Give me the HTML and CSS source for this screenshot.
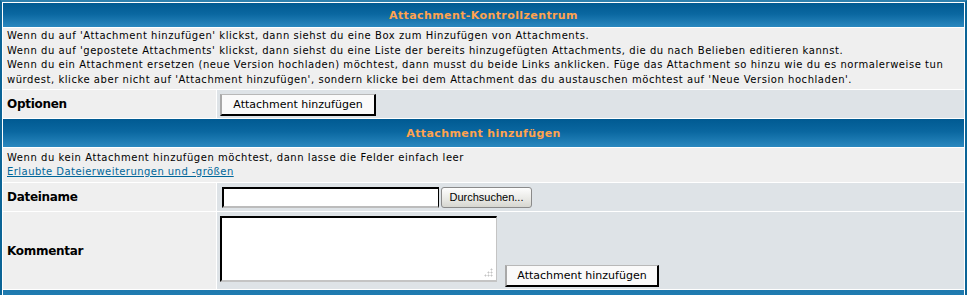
FILE: index.html
```html
<!DOCTYPE html>
<html lang="de">
<head>
  <meta charset="UTF-8" />
  <title>Attachment-Kontrollzentrum</title>
  <link rel="stylesheet" href="styles.css">
</head>
<body>
  <table class="forumline">
    <tr>
      <th colspan="2" class="head">Attachment-Kontrollzentrum</th>
    </tr>
    <tr>
      <td colspan="2" class="row1 intro">
        Wenn du auf 'Attachment hinzufügen' klickst, dann siehst du eine Box zum Hinzufügen von Attachments.<br>
        Wenn du auf 'gepostete Attachments' klickst, dann siehst du eine Liste der bereits hinzugefügten Attachments, die du nach Belieben editieren kannst.<br>
        Wenn du ein Attachment ersetzen (neue Version hochladen) möchtest, dann musst du beide Links anklicken. Füge das Attachment so hinzu wie du es normalerweise tun würdest, klicke aber nicht auf 'Attachment hinzufügen', sondern klicke bei dem Attachment das du austauschen möchtest auf 'Neue Version hochladen'.
      </td>
    </tr>
    <tr>
      <td class="row1 label">Optionen</td>
      <td class="row2 field">
        <div class="options">
          <button type="button" class="button">Attachment hinzufügen</button>
        </div>
      </td>
    </tr>
    <tr>
      <th colspan="2" class="head tall">Attachment hinzufügen</th>
    </tr>
    <tr>
      <td colspan="2" class="row1 note">
        Wenn du kein Attachment hinzufügen möchtest, dann lasse die Felder einfach leer<br>
        <a href="#">Erlaubte Dateierweiterungen und -größen</a>
      </td>
    </tr>
    <tr>
      <td class="row1 label">Dateiname</td>
      <td class="row2 field">
        <div class="file-row">
          <input type="text" class="post" readonly>
          <button type="button" class="browse">Durchsuchen...</button>
        </div>
      </td>
    </tr>
    <tr>
      <td class="row1 label">Kommentar</td>
      <td class="row2 field">
        <div class="comment-row">
          <textarea class="post" rows="3" cols="35"></textarea>
          <button type="button" class="button">Attachment hinzufügen</button>
        </div>
      </td>
    </tr>
    <tr>
      <td colspan="2" class="cat-bottom"></td>
    </tr>
  </table>
</body>
</html>
```

FILE: styles.css
```css
/* Forum table, subSilver look */
body {
  margin: 0;
  background: #fff;
  font-family: "DejaVu Sans", Verdana, sans-serif;
  color: #000;
}
.forumline {
  width: 967px;
  background: #fff;
  border: 2px solid #0b6496;
  border-top-color: #2f80ad;
  border-spacing: 1px;
}
th, td {
  padding: 0;
}
.head {
  height: 24px;
  background: linear-gradient(to bottom, #005a92 0%, #0a67a0 45%, #2a88bf 100%);
  color: #ffa34f;
  font-size: 11px;
  font-weight: bold;
  letter-spacing: 0.4px;
  text-align: center;
  vertical-align: middle;
}
.head.tall {
  height: 28px;
}
.row1 {
  background: #efefef;
}
.row2 {
  background: #dee3e7;
}
.intro {
  padding: 1px 4px 2px;
  font-size: 10px;
  line-height: 14.5px;
  letter-spacing: 0.55px;
}
.note {
  padding: 3px 4px;
  font-size: 10px;
  line-height: 14px;
  letter-spacing: 0.55px;
}
.note a {
  color: #006699;
  letter-spacing: 0.45px;
}
.label {
  width: 205px;
  padding: 0 4px;
  font-size: 12px;
  font-weight: bold;
  letter-spacing: -0.3px;
  vertical-align: middle;
}
.field {
  vertical-align: top;
}
.options {
  padding: 3px 3px 2px;
}
.button {
  height: 22px;
  width: 156px;
  padding: 0;
  background: #fafafa;
  border-style: solid;
  border-width: 1px 2px 2px 2px;
  border-color: #b8b8b8 #000 #000 #a8a8a8;
  font-family: "DejaVu Sans", Verdana, sans-serif;
  font-size: 11px;
  color: #000;
}
.file-row {
  display: flex;
  align-items: center;
  gap: 2px;
  padding: 4px 5px 3px;
}
.post {
  box-sizing: border-box;
  background: #fff;
  border-style: solid;
  border-color: #000 #000 #bcbcbc #000;
  border-width: 2px 1px 2px 2px;
  font-family: "DejaVu Sans", Verdana, sans-serif;
  font-size: 11px;
  margin: 0;
}
input.post {
  width: 217px;
  height: 21px;
}
.browse {
  height: 21px;
  width: 91px;
  padding: 0 0 2px;
  background: linear-gradient(to bottom, #fdfdfd, #e8e8e4 60%, #d6d6d0);
  border: 1px solid #8a8a8a;
  border-radius: 3px;
  font-family: "Liberation Sans", Arial, sans-serif;
  font-size: 11px;
  color: #000;
}
.comment-row {
  display: flex;
  align-items: flex-end;
  gap: 8px;
  padding: 4px 3px 2px;
}
textarea.post {
  width: 277px;
  height: 66px;
  margin-bottom: 5px;
  resize: none;
  border-color: #000 #c4c4c4 #c4c4c4 #000;
  background:
    radial-gradient(circle, #c4c4c4 0.8px, transparent 1.2px) right 3px bottom 3px / 3px 3px no-repeat,
    radial-gradient(circle, #c4c4c4 0.8px, transparent 1.2px) right 6px bottom 3px / 3px 3px no-repeat,
    radial-gradient(circle, #c4c4c4 0.8px, transparent 1.2px) right 9px bottom 3px / 3px 3px no-repeat,
    radial-gradient(circle, #c4c4c4 0.8px, transparent 1.2px) right 3px bottom 6px / 3px 3px no-repeat,
    radial-gradient(circle, #c4c4c4 0.8px, transparent 1.2px) right 6px bottom 6px / 3px 3px no-repeat,
    radial-gradient(circle, #c4c4c4 0.8px, transparent 1.2px) right 3px bottom 9px / 3px 3px no-repeat,
    #fff;
}
.comment-row .button {
  width: 154px;
}
.cat-bottom {
  height: 28px;
  background: linear-gradient(to bottom, #1e79ae, #2a86bb);
}
```
